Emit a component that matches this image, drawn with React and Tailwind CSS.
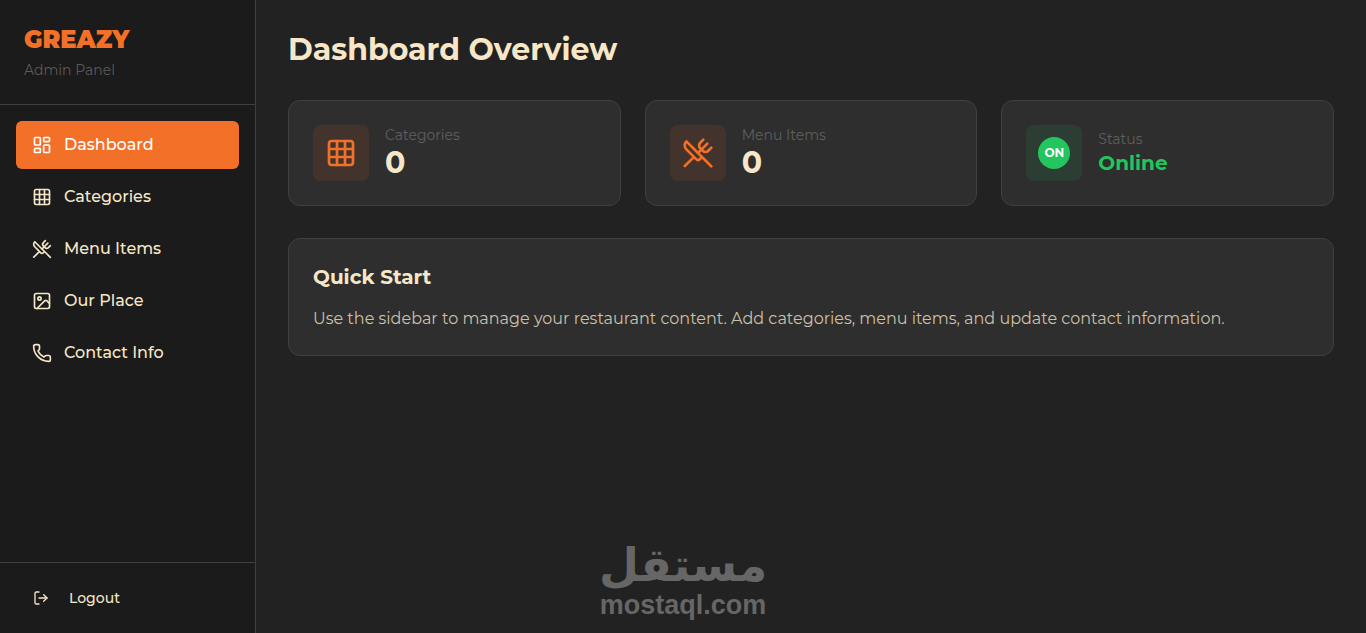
import {
  LayoutDashboard,
  Grid3x3,
  UtensilsCrossed,
  Image,
  Phone,
  LogOut,
} from 'lucide-react';

const navItems = [
  { label: 'Dashboard', href: '#dashboard', icon: LayoutDashboard },
  { label: 'Categories', href: '#categories', icon: Grid3x3 },
  { label: 'Menu Items', href: '#menu-items', icon: UtensilsCrossed },
  { label: 'Our Place', href: '#our-place', icon: Image },
  { label: 'Contact Info', href: '#contact-info', icon: Phone },
];

function Sidebar({ active }) {
  return (
    <aside className="w-64 shrink-0 flex flex-col bg-[#1b1b1b] border-r border-[#404040]">
      <div className="p-6 border-b border-[#404040]">
        <h2 className="text-2xl leading-8 font-black text-[#f37028]">GREAZY</h2>
        <p className="mt-1 text-sm text-[#5a5a5a]">Admin Panel</p>
      </div>

      <nav className="flex-1 p-4 space-y-1">
        {navItems.map(({ label, href, icon: Icon }) => (
          <a
            key={label}
            href={href}
            className={`flex items-center gap-3 px-4 py-3 rounded-md text-base font-medium ${
              label === active ? 'bg-[#f37028] text-white' : 'text-[#f7e7c8] hover:bg-[#2e2e2e]'
            }`}
          >
            <Icon className="size-5" />
            {label}
          </a>
        ))}
      </nav>

      <div className="p-4 border-t border-[#404040]">
        <button
          type="button"
          className="w-full flex items-center gap-5 px-4 py-2 border border-transparent rounded-md text-sm font-medium text-[#f7e7c8]"
        >
          <LogOut className="size-4" />
          Logout
        </button>
      </div>
    </aside>
  );
}

function StatCard({ label, tint, icon, children }) {
  return (
    <div className="flex items-center gap-4 p-6 bg-[#2e2e2e] border border-[#404040] rounded-xl">
      <div className={`size-14 shrink-0 flex items-center justify-center rounded-lg ${tint}`}>
        {icon}
      </div>
      <div>
        <p className="text-sm text-[#5e5e5e]">{label}</p>
        {children}
      </div>
    </div>
  );
}

export default function App() {
  return (
    <div className="relative min-h-screen flex bg-[#222222] text-[#f7e7c8] font-[Montserrat,Inter,sans-serif]">
      <Sidebar active="Dashboard" />

      <main className="flex-1 min-w-0 p-8">
        <h1 className="text-3xl leading-9 font-bold mb-8">Dashboard Overview</h1>

        <div className="grid grid-cols-3 gap-6 mb-8">
          <StatCard
            label="Categories"
            tint="bg-[#f37028]/10"
            icon={<Grid3x3 className="size-8 text-[#f37028]" />}
          >
            <p className="text-3xl leading-9 font-bold">0</p>
          </StatCard>
          <StatCard
            label="Menu Items"
            tint="bg-[#f37028]/10"
            icon={<UtensilsCrossed className="size-8 text-[#f37028]" />}
          >
            <p className="text-3xl leading-9 font-bold">0</p>
          </StatCard>
          <StatCard
            label="Status"
            tint="bg-[#22c55e]/10"
            icon={
              <span className="size-8 flex items-center justify-center rounded-full bg-[#22c55e] text-white text-xs font-bold">
                ON
              </span>
            }
          >
            <p className="text-xl leading-7 font-bold text-[#22c55e]">Online</p>
          </StatCard>
        </div>

        <section className="p-6 bg-[#2e2e2e] border border-[#404040] rounded-xl">
          <h3 className="text-xl leading-7 font-bold mb-4">Quick Start</h3>
          <p className="text-base text-[#cdc0a8]">
            Use the sidebar to manage your restaurant content. Add categories, menu items, and update
            contact information.
          </p>
        </section>
      </main>

      {/* Watermark over the bottom of the page */}
      <div className="absolute bottom-3 inset-x-0 flex flex-col items-center font-bold text-[#666666] pointer-events-none">
        <span lang="ar" dir="rtl" className="text-[46px] leading-12 font-['DejaVu_Sans',sans-serif]">
          مستقل
        </span>
        <span className="text-[27px] leading-8 font-['Liberation_Sans',sans-serif]">mostaql.com</span>
      </div>
    </div>
  );
}
